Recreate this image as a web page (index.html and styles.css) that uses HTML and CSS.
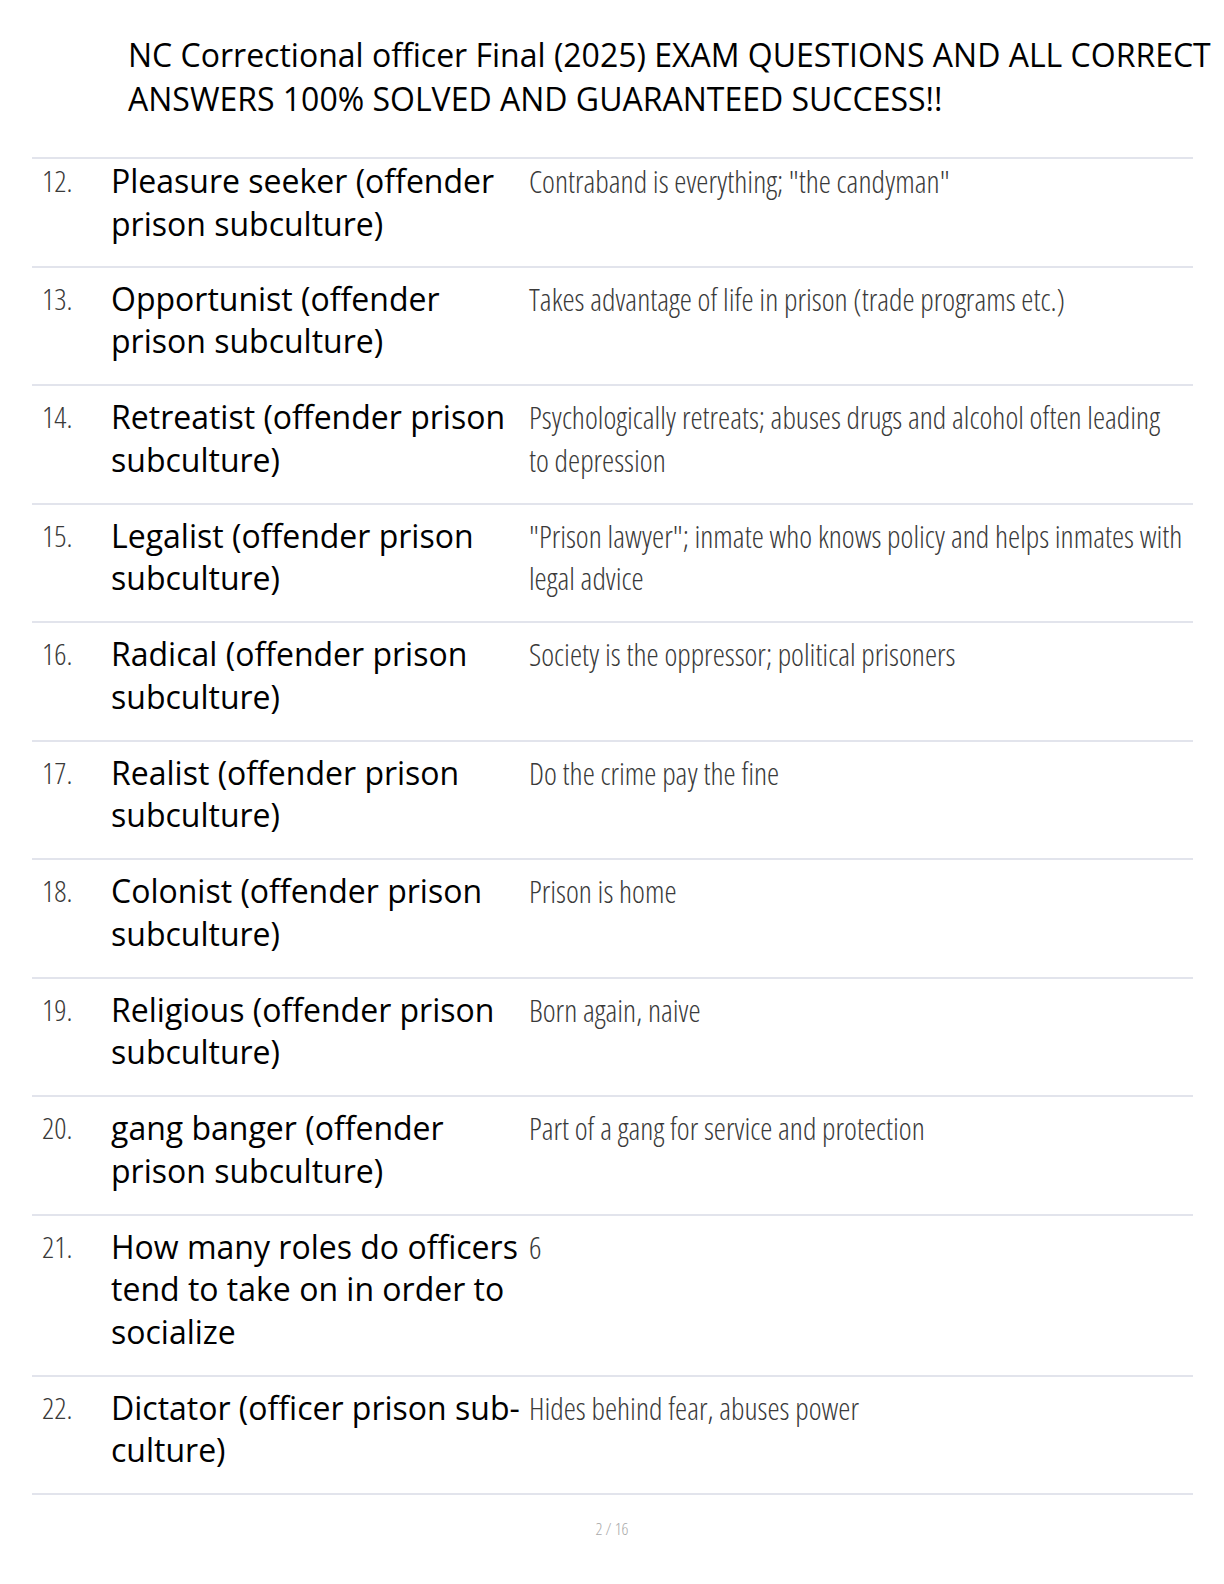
FILE: index.html
```html
<!DOCTYPE html>
<html lang="en">
<head>
    <meta charset="UTF-8">
    <title>NC Correctional officer Final (2025)</title>
    <link rel="stylesheet" href="styles.css">
</head>
<body>
    <div class="page">
        <h1 class="title">NC Correctional officer Final (2025) EXAM QUESTIONS AND ALL CORRECT ANSWERS 100% SOLVED AND GUARANTEED SUCCESS!!</h1>

        <div class="cards">
            <div class="card first">
                <div class="num">12.</div>
                <div class="term">Pleasure seeker (offender prison subculture)</div>
                <div class="def">Contraband is everything; "the candyman"</div>
            </div>
            <div class="card">
                <div class="num">13.</div>
                <div class="term">Opportunist (offender prison subculture)</div>
                <div class="def">Takes advantage of life in prison (trade programs etc.)</div>
            </div>
            <div class="card">
                <div class="num">14.</div>
                <div class="term">Retreatist (offender prison subculture)</div>
                <div class="def">Psychologically retreats; abuses drugs and alcohol often leading to depression</div>
            </div>
            <div class="card">
                <div class="num">15.</div>
                <div class="term">Legalist (offender prison subculture)</div>
                <div class="def">"Prison lawyer"; inmate who knows policy and helps inmates with legal advice</div>
            </div>
            <div class="card">
                <div class="num">16.</div>
                <div class="term">Radical (offender prison subculture)</div>
                <div class="def">Society is the oppressor; political prisoners</div>
            </div>
            <div class="card">
                <div class="num">17.</div>
                <div class="term">Realist (offender prison subculture)</div>
                <div class="def">Do the crime pay the fine</div>
            </div>
            <div class="card">
                <div class="num">18.</div>
                <div class="term">Colonist (offender prison subculture)</div>
                <div class="def">Prison is home</div>
            </div>
            <div class="card">
                <div class="num">19.</div>
                <div class="term">Religious (offender prison subculture)</div>
                <div class="def">Born again, naive</div>
            </div>
            <div class="card">
                <div class="num">20.</div>
                <div class="term">gang banger (offender prison subculture)</div>
                <div class="def">Part of a gang for service and protection</div>
            </div>
            <div class="card">
                <div class="num">21.</div>
                <div class="term">How many roles do officers tend to take on in order to socialize</div>
                <div class="def">6</div>
            </div>
            <div class="card">
                <div class="num">22.</div>
                <div class="term">Dictator (officer prison sub-culture)</div>
                <div class="def">Hides behind fear, abuses power</div>
            </div>
        </div>

        <div class="pager">2 / 16</div>
    </div>
</body>
</html>
```

FILE: styles.css
```css
body {
    margin: 0;
    background: #fff;
    color: #000;
    font-family: "Open Sans", "Noto Sans", sans-serif;
}
.page {
    width: 1224px;
    padding-top: 33px;
}
.title {
    margin: 0 0 0 128px;
    font-size: 32px;
    font-weight: 400;
    line-height: 43.5px;
}
.cards {
    margin: 37px 31px 0 32px;
    border-top: 2px solid #e2e4ec;
}
.card {
    display: grid;
    grid-template-columns: 79px 418px 1fr;
    padding: 10px 0 21.5px;
    border-bottom: 2px solid #e2e4ec;
}
.card.first {
    padding-top: 1px;
    padding-bottom: 20.5px;
}
.num {
    padding-left: 10px;
    font-size: 30px;
    font-weight: 300;
    font-stretch: 75%;
    line-height: 42.5px;
    color: #3a3a3a;
}
.term {
    font-size: 32px;
    line-height: 42.5px;
    color: #000;
}
.def {
    padding-right: 9px;
    font-size: 30.7px;
    font-weight: 300;
    font-stretch: 75%;
    line-height: 42.5px;
    color: #3a3a3a;
}
.pager {
    margin-top: 22px;
    text-align: center;
    font-size: 17px;
    font-weight: 300;
    font-stretch: 75%;
    color: #aaa;
}
```
